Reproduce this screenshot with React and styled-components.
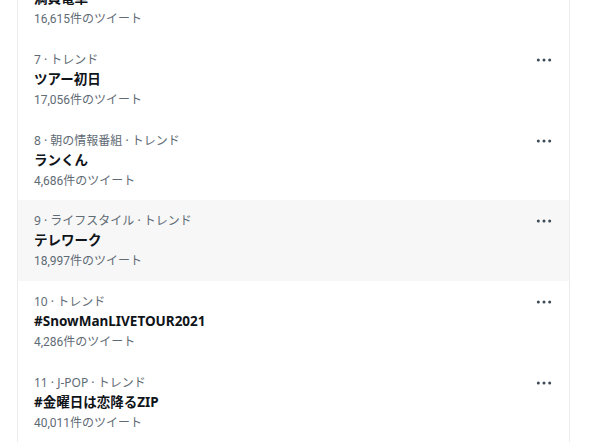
import React from 'react'
import styled, { createGlobalStyle } from 'styled-components'

const Global = createGlobalStyle`
    html, body {
        margin: 0;
        padding: 0;
        background: #ffffff;
        overflow: hidden;
    }
    body {
        font-family: "Noto Sans", "Noto Sans CJK JP", sans-serif;
    }
`

const Page = styled.div`
    width: 590px;
    height: 442px;
    overflow: hidden;
    display: flex;
    padding-left: 17px;
    box-sizing: border-box;
`

const Column = styled.section`
    width: 553px;
    border-left: 1px solid #ebeef0;
    border-right: 1px solid #ebeef0;
    box-sizing: border-box;
    display: flex;
    flex-direction: column;
    flex-shrink: 0;
    /* list is scrolled a little past row 6 */
    margin-top: ${p => p.offset}px;
`

const Row = styled.div`
    display: flex;
    align-items: flex-start;
    justify-content: space-between;
    padding: 13px 16px 0 16px;
    background: ${p => (p.hovered ? '#f7f7f7' : '#ffffff')};
    height: 80.75px;
    box-sizing: border-box;
    flex-shrink: 0;
`

const Body = styled.div`
    display: flex;
    flex-direction: column;
`

const Meta = styled.div`
    font-size: 12px;
    line-height: 16px;
    color: #5f6b75;
`

const Title = styled.div`
    font-size: 13.5px;
    line-height: 20px;
    font-weight: 700;
    color: #0f1419;
    padding-top: 1px;
`

const Count = styled.div`
    font-family: Roboto, "Noto Sans CJK JP", sans-serif;
    font-size: 12px;
    line-height: 16px;
    color: #5f6b75;
    margin-top: 3px;
`

const More = styled.div`
    width: 18px;
    height: 18px;
    margin-top: -1px;
    display: flex;
    align-items: center;
    justify-content: center;
`

const MoreIcon = () => (
    <svg width="18" height="18" viewBox="0 0 18 18">
        <circle cx="3.3" cy="9" r="1.5" fill="#3d4a55" />
        <circle cx="9" cy="9" r="1.5" fill="#3d4a55" />
        <circle cx="14.7" cy="9" r="1.5" fill="#3d4a55" />
    </svg>
)

const trends = [
    { rank: 6, category: 'トレンド', name: '満員電車', count: '16,615' },
    { rank: 7, category: 'トレンド', name: 'ツアー初日', count: '17,056' },
    { rank: 8, category: '朝の情報番組 · トレンド', name: 'ランくん', count: '4,686' },
    { rank: 9, category: 'ライフスタイル · トレンド', name: 'テレワーク', count: '18,997', hovered: true },
    { rank: 10, category: 'トレンド', name: '#SnowManLIVETOUR2021', count: '4,286' },
    { rank: 11, category: 'J-POP · トレンド', name: '#金曜日は恋降るZIP', count: '40,011' },
]

export default function App() {
    return (
        <Page>
            <Global />
            <Column offset={-42}>
                {trends.map(t => (
                    <Row key={t.rank} hovered={t.hovered}>
                        <Body>
                            <Meta>{t.rank} · {t.category}</Meta>
                            <Title>{t.name}</Title>
                            <Count>{t.count}件のツイート</Count>
                        </Body>
                        <More>
                            <MoreIcon />
                        </More>
                    </Row>
                ))}
            </Column>
        </Page>
    )
}
